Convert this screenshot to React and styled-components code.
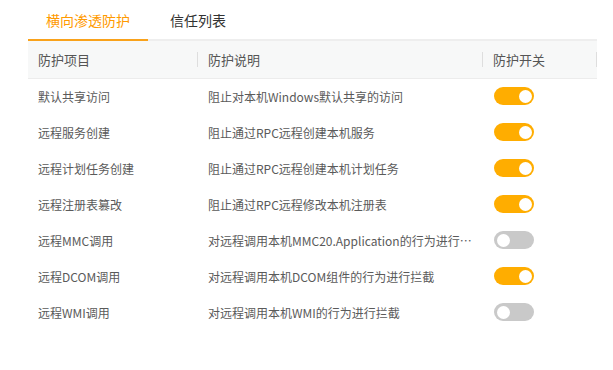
import React, { useState } from 'react';
import styled, { createGlobalStyle } from 'styled-components';

const GlobalStyle = createGlobalStyle`
  body {
    margin: 0;
    background: #fff;
    font-family: "Noto Sans CJK SC", "Noto Sans", sans-serif;
  }
`;

const Page = styled.div`
  padding: 0 16px 0 28px;
  width: 569px;
`;

const Tabs = styled.div`
  display: flex;
  height: 39px;
  border-bottom: 2px solid #eeeeee;
`;

const Tab = styled.div`
  width: ${(p) => p.$w}px;
  display: flex;
  align-items: center;
  justify-content: center;
  font-size: 14px;
  color: ${(p) => (p.$active ? '#ff9a00' : '#333')};
  margin-bottom: -2px;
  border-bottom: 2px solid ${(p) => (p.$active ? '#f9a21b' : 'transparent')};
  cursor: pointer;
`;

const Table = styled.div`
  display: flex;
  flex-direction: column;
`;

const Grid = styled.div`
  display: grid;
  grid-template-columns: 170px 285px 114px;
  align-items: center;
`;

const HeadRow = styled(Grid)`
  height: 37px;
  background: #f7f8f8;
  border-bottom: 1px solid #ececec;
`;

const HeadCell = styled.div`
  font-size: 13px;
  color: #555;
  padding-left: 10px;
  height: 100%;
  display: flex;
  align-items: center;
  position: relative;
  &::after {
    content: '';
    position: absolute;
    right: 0;
    top: 11px;
    bottom: 11px;
    width: 1px;
    background: #dedede;
  }
`;

const Row = styled(Grid)`
  height: 36px;
  margin-top: -1px;
  margin-bottom: 1px;
`;

const Cell = styled.div`
  font-size: 12px;
  color: #5a5a5a;
  padding-left: 10px;
  padding-right: 6px;
  white-space: nowrap;
  overflow: hidden;
  text-overflow: ellipsis;
`;

const Switch = styled.button`
  display: block;
  margin-left: 11px;
  width: 40px;
  height: 18px;
  border: none;
  border-radius: 9px;
  padding: 0;
  background: ${(p) => (p.$on ? '#ffad00' : '#c9c9c9')};
  position: relative;
  cursor: pointer;
  &::after {
    content: '';
    position: absolute;
    top: 2.5px;
    left: ${(p) => (p.$on ? '24.5px' : '2.5px')};
    width: 13px;
    height: 13px;
    border-radius: 50%;
    background: #fff;
  }
`;

const rows = [
  ['默认共享访问', '阻止对本机Windows默认共享的访问', true],
  ['远程服务创建', '阻止通过RPC远程创建本机服务', true],
  ['远程计划任务创建', '阻止通过RPC远程创建本机计划任务', true],
  ['远程注册表篡改', '阻止通过RPC远程修改本机注册表', true],
  ['远程MMC调用', '对远程调用本机MMC20.Application的行为进行拦截', false],
  ['远程DCOM调用', '对远程调用本机DCOM组件的行为进行拦截', true],
  ['远程WMI调用', '对远程调用本机WMI的行为进行拦截', false],
];

const App = () => {
  const [tab, setTab] = useState(0);
  const [states, setStates] = useState(rows.map((r) => r[2]));

  const toggle = (i) => {
    setStates((s) => s.map((v, j) => (j === i ? !v : v)));
  };

  return (
    <Page>
      <GlobalStyle />
      <Tabs>
        <Tab $w={120} $active={tab === 0} onClick={() => setTab(0)}>横向渗透防护</Tab>
        <Tab $w={100} $active={tab === 1} onClick={() => setTab(1)}>信任列表</Tab>
      </Tabs>
      <Table>
        <HeadRow>
          <HeadCell>防护项目</HeadCell>
          <HeadCell>防护说明</HeadCell>
          <HeadCell>防护开关</HeadCell>
        </HeadRow>
        {rows.map((r, i) => (
          <Row key={r[0]}>
            <Cell>{r[0]}</Cell>
            <Cell>{r[1]}</Cell>
            <div>
              <Switch $on={states[i]} onClick={() => toggle(i)} />
            </div>
          </Row>
        ))}
      </Table>
    </Page>
  );
};

export default App;
